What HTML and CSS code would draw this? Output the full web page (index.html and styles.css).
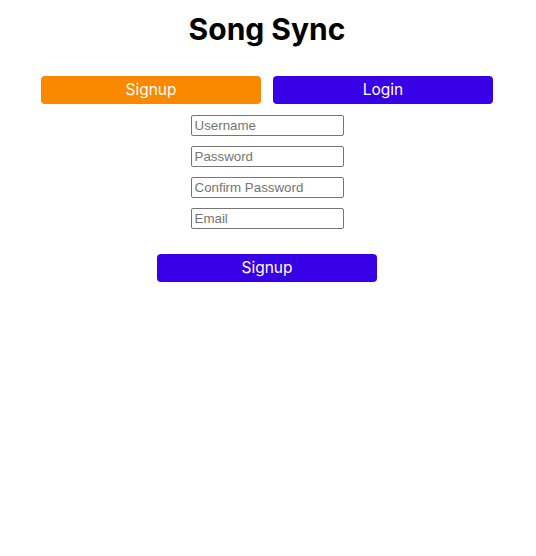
FILE: index.html
```html
<!DOCTYPE html>
<html>
<head>
<meta charset="utf-8">
<link rel="stylesheet" href="styles.css">
</head>
<body>
<div class="page">
  <h1 class="title">Song Sync</h1>
  <div class="tabs">
    <button class="btn btn-orange">Signup</button>
    <button class="btn btn-blue">Login</button>
  </div>
  <form class="form">
    <input class="field" type="text" placeholder="Username">
    <input class="field" type="password" placeholder="Password">
    <input class="field" type="password" placeholder="Confirm Password">
    <input class="field" type="email" placeholder="Email">
  </form>
  <button class="btn btn-blue submit">Signup</button>
</div>
</body>
</html>
```

FILE: styles.css
```css
html, body {
  margin: 0;
  padding: 0;
  background: #ffffff;
}
.page {
  display: flex;
  flex-direction: column;
  align-items: center;
  width: 534px;
  font-family: Inter, "Liberation Sans", sans-serif;
}
.title {
  margin: 10px 0 0 0;
  font-size: 30px;
  font-weight: 700;
  line-height: 38px;
  color: #000;
}
.tabs {
  display: flex;
  gap: 12px;
  margin-top: 28px;
}
.btn {
  width: 220px;
  height: 28px;
  border: none;
  border-radius: 4px;
  color: #fff;
  font-family: Inter, "Liberation Sans", sans-serif;
  font-size: 15.5px;
  padding: 0 0 2px 0;
  cursor: pointer;
}
.btn-orange {
  background: #fb8900;
}
.btn-blue {
  background: #3700e6;
}
.form {
  display: flex;
  flex-direction: column;
  gap: 10px;
  margin: 11px 0 0 0;
}
.field {
  width: 153px;
  height: 21px;
  box-sizing: border-box;
  border: 1px solid #767676;
  border-radius: 2px;
  padding: 1px 3px;
  font-family: "Liberation Sans", Arial, sans-serif;
  font-size: 13.33px;
  color: #000;
}
.field::placeholder {
  color: #757575;
}
.submit {
  margin-top: 25px;
}
```
